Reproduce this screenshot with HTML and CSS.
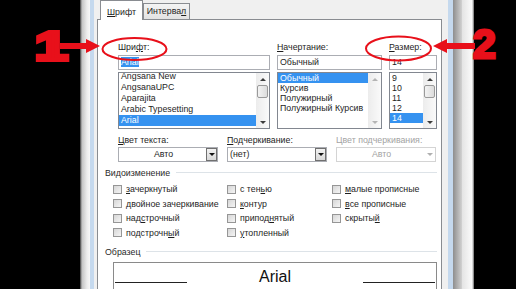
FILE: index.html
```html
<!DOCTYPE html>
<html lang="ru">
<head>
    <meta charset="UTF-8">
    <meta name="viewport" content="width=device-width, initial-scale=1.0">
    <title>Шрифт</title>
    <link rel="stylesheet" href="styles.css">
</head>
<body>
    <div class="window">
        <div class="frame-left"></div>
        <div class="dialog">
            <div class="tabs">
                <div class="tab active"><u>Ш</u>рифт</div>
                <div class="tab">Интерва<u>л</u></div>
            </div>
            <div class="panel">
                <div class="font-row">
                    <div class="field font-field">
                        <div class="label">Шри<u>ф</u>т:</div>
                        <div class="input"><span class="text-sel">Arial</span></div>
                        <div class="list">
                            <div class="items">
                                <div class="item">Angsana New</div>
                                <div class="item">AngsanaUPC</div>
                                <div class="item">Aparajita</div>
                                <div class="item">Arabic Typesetting</div>
                                <div class="item selected">Arial</div>
                            </div>
                            <div class="scrollbar">
                                <div class="arrow up"></div>
                                <div class="track"><div class="thumb"></div></div>
                                <div class="arrow down"></div>
                            </div>
                        </div>
                    </div>
                    <div class="field style-field">
                        <div class="label"><u>Н</u>ачертание:</div>
                        <div class="input">Обычный</div>
                        <div class="list">
                            <div class="items">
                                <div class="item selected">Обычный</div>
                                <div class="item">Курсив</div>
                                <div class="item">Полужирный</div>
                                <div class="item">Полужирный Курсив</div>
                            </div>
                            <div class="scrollbar disabled">
                                <div class="arrow up"></div>
                                <div class="track"></div>
                                <div class="arrow down"></div>
                            </div>
                        </div>
                    </div>
                    <div class="field size-field">
                        <div class="label"><u>Р</u>азмер:</div>
                        <div class="input">14</div>
                        <div class="list">
                            <div class="items">
                                <div class="item">9</div>
                                <div class="item">10</div>
                                <div class="item">11</div>
                                <div class="item">12</div>
                                <div class="item selected">14</div>
                            </div>
                            <div class="scrollbar">
                                <div class="arrow up"></div>
                                <div class="track"><div class="thumb"></div></div>
                                <div class="arrow down"></div>
                            </div>
                        </div>
                    </div>
                </div>

                <div class="color-row">
                    <div class="field">
                        <div class="label"><u>Ц</u>вет текста:</div>
                        <div class="combo">
                            <span class="combo-value center">Авто</span>
                            <span class="combo-btn"></span>
                        </div>
                    </div>
                    <div class="field">
                        <div class="label"><u>П</u>одчеркивание:</div>
                        <div class="combo">
                            <span class="combo-value">(нет)</span>
                            <span class="combo-btn"></span>
                        </div>
                    </div>
                    <div class="field">
                        <div class="label off">Цвет подчеркивания:</div>
                        <div class="combo off">
                            <span class="combo-value center">Авто</span>
                            <span class="combo-btn"></span>
                        </div>
                    </div>
                </div>

                <div class="group-title">Видоизменение</div>
                <div class="checks">
                    <div class="check"><span class="box"></span><u>з</u>ачеркнутый</div>
                    <div class="check"><span class="box"></span>с тен<u>ь</u>ю</div>
                    <div class="check"><span class="box"></span><u>м</u>алые прописные</div>
                    <div class="check"><span class="box"></span><u>д</u>войное зачеркивание</div>
                    <div class="check"><span class="box"></span><u>к</u>онтур</div>
                    <div class="check"><span class="box"></span><u>в</u>се прописные</div>
                    <div class="check"><span class="box"></span>над<u>с</u>трочный</div>
                    <div class="check"><span class="box"></span>припод<u>н</u>ятый</div>
                    <div class="check"><span class="box"></span>скрыты<u>й</u></div>
                    <div class="check"><span class="box"></span>подстрочн<u>ы</u>й</div>
                    <div class="check"><span class="box"></span><u>у</u>топленный</div>
                </div>

                <div class="group-title">Образец</div>
                <div class="preview">
                    <div class="rule"></div>
                    <div class="sample">Arial</div>
                    <div class="rule"></div>
                </div>
            </div>
        </div>
        <div class="frame-right"></div>
    </div>

    <svg class="marks" width="516" height="289" viewBox="0 0 516 289">
        <ellipse cx="134.5" cy="49" rx="32" ry="11"></ellipse>
        <ellipse cx="398.5" cy="48.5" rx="32.5" ry="12"></ellipse>
        <rect x="60" y="43" width="27" height="6"></rect>
        <polygon points="86,39 100,46 86,53"></polygon>
        <rect x="446" y="43" width="29" height="6"></rect>
        <polygon points="447,39 433,46 447,53"></polygon>
        <text class="one" transform="translate(35 60) scale(1.45 1)">1</text>
        <text x="473" y="58">2</text>
    </svg>
</body>
</html>
```

FILE: styles.css
```css
* {
    box-sizing: border-box;
}
body {
    margin: 0;
    width: 516px;
    height: 289px;
    overflow: hidden;
    position: relative;
    background: #000;
    font-family: "Liberation Sans", Arial, sans-serif;
    font-size: 8.8px;
    color: #1e1e1e;
}
u {
    text-decoration: underline;
    text-underline-offset: 1px;
}

/* window frame */
.window {
    display: flex;
    width: 394px;
    height: 289px;
    margin-left: 80px;
}
.frame-left {
    width: 17px;
    background: linear-gradient(to right, #3a3a3a 0, #c4c4c4 2px, #ededed 7px, #f8f8f8 10px, #c5d9ee 10px, #c5d9ee 14px, #f0f0f0 14px);
}
.frame-right {
    width: 32px;
    background: linear-gradient(to right, #f0f0f0 0, #f0f0f0 6px, #c5d9ee 6px, #c5d9ee 11px, #8e8e8e 11px, #d2d2d2 20px, #e4e4e4 20px, #fbfbfb 30px, #6a6a6a 32px);
}
.dialog {
    width: 345px;
    display: flex;
    flex-direction: column;
    background: #f0f0f0;
}

/* tabs */
.tabs {
    display: flex;
    align-items: flex-end;
    height: 19px;
    padding-left: 3px;
}
.tab {
    width: 47px;
    height: 16px;
    line-height: 14px;
    text-align: center;
    border: 1px solid #898c91;
    border-bottom: none;
    background: linear-gradient(#f4f4f4, #e2e2e2);
}
.tab.active {
    position: relative;
    z-index: 1;
    width: 43px;
    height: 20px;
    margin-bottom: -1px;
    line-height: 22px;
    background: #fff;
}

.panel {
    flex: 1;
    background: #fff;
    border: 1px solid #898c91;
    padding: 22px 4px 0 7px;
}
.label {
    height: 11px;
    line-height: 11px;
    margin-bottom: 2px;
    white-space: nowrap;
}
.label.off {
    color: #a3a3a3;
}

/* font / style / size */
.font-row {
    display: flex;
    gap: 7px;
    margin-left: 13px;
}
.font-field { width: 152px; }
.style-field { width: 105px; }
.size-field { width: 48px; }

.input {
    height: 15px;
    line-height: 13px;
    padding-left: 2px;
    border: 1px solid #abadb3;
    white-space: nowrap;
}
.text-sel {
    background: #3592f0;
    color: #fff;
}
.list {
    display: flex;
    height: 57px;
    margin-top: 2px;
    border: 1px solid #828790;
    overflow: hidden;
}
.items {
    flex: 1;
    overflow: hidden;
}
.item {
    height: 10px;
    line-height: 10px;
    padding-left: 2px;
    white-space: nowrap;
}
.font-field .items {
    margin-top: -2px;
}
.font-field .item {
    height: 11px;
    line-height: 11px;
}
.item.selected {
    background: #3592f0;
    color: #fff;
}

.scrollbar {
    width: 13px;
    display: flex;
    flex-direction: column;
    background: linear-gradient(to right, #ececec, #fafafa);
}
.arrow {
    height: 12px;
    display: flex;
    align-items: center;
    justify-content: center;
}
.arrow::before {
    content: "";
    border-left: 3px solid transparent;
    border-right: 3px solid transparent;
}
.arrow.up::before {
    border-bottom: 3px solid #3c3c3c;
}
.arrow.down::before {
    border-top: 3px solid #3c3c3c;
}
.scrollbar.disabled .arrow.up::before {
    border-bottom-color: #b4b4b4;
}
.scrollbar.disabled .arrow.down::before {
    border-top-color: #b4b4b4;
}
.track {
    flex: 1;
    padding: 0 1px;
}
.thumb {
    height: 13px;
    border: 1px solid #9a9a9a;
    border-radius: 2px;
    background: linear-gradient(to right, #f3f3f3, #dcdcdc);
}

/* colours */
.color-row {
    display: flex;
    margin-top: 6px;
    margin-left: 13px;
}
.color-row .field {
    width: 100px;
}
.color-row .field + .field {
    margin-left: 9px;
}
.color-row .label {
    margin-bottom: 1px;
}
.combo {
    display: flex;
    height: 15px;
    border: 1px solid #abadb3;
}
.combo-value {
    flex: 1;
    line-height: 13px;
    padding-left: 2px;
}
.combo-value.center {
    text-align: center;
}
.combo-btn {
    width: 11px;
    display: flex;
    align-items: center;
    justify-content: center;
    border: 1px solid #707070;
    background: linear-gradient(#f2f2f2, #d8d8d8);
}
.combo-btn::before {
    content: "";
    border-left: 3px solid transparent;
    border-right: 3px solid transparent;
    border-top: 3px solid #111;
}
.combo.off {
    border-color: #d4d4d4;
    color: #a3a3a3;
}
.combo.off .combo-btn {
    border-color: transparent;
    background: none;
}
.combo.off .combo-btn::before {
    border-top-color: #b0b0b0;
}

/* groups */
.group-title {
    display: flex;
    align-items: center;
    height: 11px;
    margin-top: 5px;
    color: #2a2a2a;
}
.group-title::after {
    content: "";
    flex: 1;
    height: 1px;
    margin-left: 6px;
    background: #dde3e8;
}
.checks {
    display: grid;
    grid-template-columns: 114px 105px auto;
    grid-auto-rows: 14.5px;
    margin: 4px 0 0 8px;
}
.check {
    display: flex;
    align-items: center;
    white-space: nowrap;
}
.box {
    width: 9px;
    height: 9px;
    margin-right: 4px;
    border: 1px solid #969696;
    background: linear-gradient(135deg, #d6d6d6, #f5f5f5);
}
.checks + .group-title {
    margin-top: 6px;
}

/* sample */
.preview {
    display: flex;
    justify-content: space-between;
    align-items: flex-start;
    height: 40px;
    margin: 5px 0 0 8px;
    padding: 0 1px;
    border: 1px solid #8a8a8a;
}
.rule {
    width: 72px;
    height: 20px;
    border-bottom: 1px solid #222;
}
.sample {
    margin-top: 5.5px;
    font-size: 16px;
    line-height: 16px;
    color: #111;
}

/* red marks over the screenshot */
.marks {
    position: absolute;
    top: 0;
    left: 0;
    pointer-events: none;
}
.marks ellipse {
    fill: none;
    stroke: #e8101a;
    stroke-width: 2;
}
.marks rect,
.marks polygon {
    fill: #e8101a;
}
.marks text {
    font-family: "Liberation Sans", Arial, sans-serif;
    font-weight: bold;
    font-size: 41px;
    fill: #e8101a;
    stroke: #e8101a;
    stroke-width: 3;
    stroke-linejoin: miter;
}
.marks .one {
    stroke-width: 4;
}
```
